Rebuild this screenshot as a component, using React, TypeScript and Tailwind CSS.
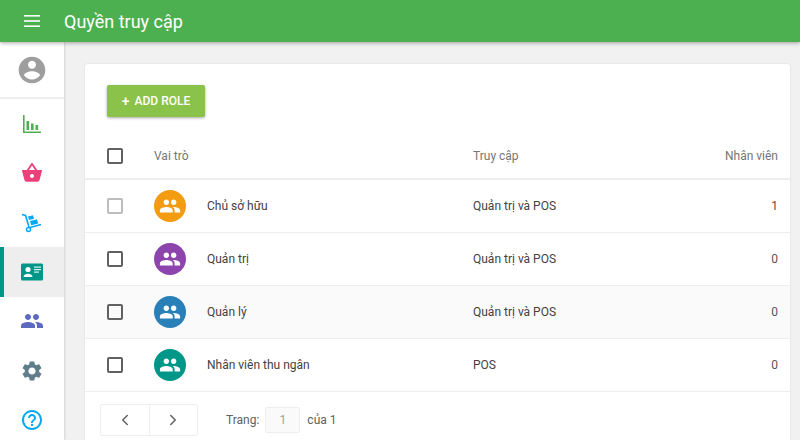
import React from "react";
import { ChevronLeft, ChevronRight } from "lucide-react";

const P = ({ d, c, s = 24 }: { d: string; c: string; s?: number }) => (
  <svg width={s} height={s} viewBox="0 0 24 24" fill={c}><path d={d} /></svg>
);

const people = "M16 11c1.66 0 2.99-1.34 2.99-3S17.66 5 16 5s-3 1.34-3 3 1.34 3 3 3zm-8 0c1.66 0 2.99-1.34 2.99-3S9.66 5 8 5 5 6.34 5 8s1.34 3 3 3zm0 2c-2.33 0-7 1.17-7 3.5V19h14v-2.5c0-2.33-4.67-3.5-7-3.5zm8 0c-.29 0-.62.02-.97.05 1.16.84 1.97 1.97 1.97 3.45V19h6v-2.5c0-2.33-4.67-3.5-7-3.5z";

const navIcons = [
  { c: "#4caf50", el: (
    <svg width="20" height="20" viewBox="0 0 20 20" fill="#4caf50"><path d="M1 1h1.6v16.4H19V19H1z" /><rect x="4.5" y="7" width="2.6" height="9" /><rect x="9" y="9.5" width="2.6" height="6.5" /><rect x="13.3" y="4" width="0" height="0" /><rect x="13.5" y="11" width="2.6" height="5" /></svg>
  ) },
  { c: "#ec407a", el: <P s={24} c="#ec407a" d="M17.21 9l-4.38-6.56c-.19-.28-.51-.42-.83-.42-.32 0-.64.14-.83.43L6.79 9H2v1l2.53 9.27c.23.84 1 1.46 1.92 1.46h11.1c.92 0 1.69-.62 1.93-1.46L22 10V9h-4.79zM9 9l3-4.4L15 9H9zm3 8c-1.1 0-2-.9-2-2s.9-2 2-2 2 .9 2 2-.9 2-2 2z" /> },
  { c: "#03a9f4", el: (
    <svg width="24" height="24" viewBox="0 0 24 24" fill="none"><path d="M2 4.5l3.5 1L9 17" stroke="#03a9f4" strokeWidth="1.6" /><path d="M10 17.5l11-3" stroke="#03a9f4" strokeWidth="1.6" /><circle cx="8.5" cy="19.5" r="2" stroke="#03a9f4" strokeWidth="1.5" /><path d="M8 6.5l5-1.3 1 3.6-5 1.3zM10 11l7-1.8 1.2 4.2-7 1.8z" fill="#03a9f4" /></svg>
  ) },
  { c: "#009688", el: (
    <svg width="22" height="18" viewBox="0 0 22 18"><rect width="22" height="17" y="0.5" rx="1.5" fill="#009688" /><circle cx="7" cy="6.5" r="2.6" fill="#fff" /><path d="M2.5 14c0-2.2 2.6-3.3 4.5-3.3s4.5 1.1 4.5 3.3z" fill="#fff" /><path d="M13 3.5h7v1.3h-7zM13 6h7v1.3h-7zM13 8.5h5v1.3h-5z" fill="#d5eeeb" /></svg>
  ), active: true },
  { c: "#5c6bc0", el: <P c="#5c6bc0" d={people} /> },
  { c: "#607d8b", el: <P c="#607d8b" d="M19.14 12.94c.04-.3.06-.61.06-.94 0-.32-.02-.64-.07-.94l2.03-1.58c.18-.14.23-.41.12-.61l-1.92-3.32c-.12-.22-.37-.29-.59-.22l-2.39.96c-.5-.38-1.03-.7-1.62-.94l-.36-2.54c-.04-.24-.24-.41-.48-.41h-3.84c-.24 0-.43.17-.47.41l-.36 2.54c-.59.24-1.13.57-1.62.94l-2.39-.96c-.22-.08-.47 0-.59.22L2.74 8.87c-.12.21-.08.47.12.61l2.03 1.58c-.05.3-.09.63-.09.94s.02.64.07.94l-2.03 1.58c-.18.14-.23.41-.12.61l1.92 3.32c.12.22.37.29.59.22l2.39-.96c.5.38 1.03.7 1.62.94l.36 2.54c.05.24.24.41.48.41h3.84c.24 0 .44-.17.47-.41l.36-2.54c.59-.24 1.13-.56 1.62-.94l2.39.96c.22.08.47 0 .59-.22l1.92-3.32c.12-.22.07-.47-.12-.61l-2.01-1.58zM12 15.6c-1.98 0-3.6-1.62-3.6-3.6s1.62-3.6 3.6-3.6 3.6 1.62 3.6 3.6-1.62 3.6-3.6 3.6z" /> },
  { c: "#03a9f4", el: <P c="#03a9f4" d="M11 18h2v-2h-2v2zm1-16C6.48 2 2 6.48 2 12s4.48 10 10 10 10-4.48 10-10S17.52 2 12 2zm0 18c-4.41 0-8-3.59-8-8s3.59-8 8-8 8 3.59 8 8-3.59 8-8 8zm0-14c-2.21 0-4 1.79-4 4h2c0-1.1.9-2 2-2s2 .9 2 2c0 2-3 1.75-3 5h2c0-2.25 3-2.5 3-5 0-2.21-1.79-4-4-4z" /> },
];

const rows = [
  { name: "Chủ sở hữu", access: "Quản trị và POS", n: "1", color: "#f39c12", box: "border-[#bdbdbd]", numC: "text-[#8c3a3a]" },
  { name: "Quản trị", access: "Quản trị và POS", n: "0", color: "#8e44ad", box: "border-[#616161]", numC: "text-[#555]" },
  { name: "Quản lý", access: "Quản trị và POS", n: "0", color: "#2980b9", box: "border-[#616161]", numC: "text-[#555]", hover: true },
  { name: "Nhân viên thu ngân", access: "POS", n: "0", color: "#009688", box: "border-[#616161]", numC: "text-[#555]" },
];

export default function App() {
  return (
    <div className="w-[800px] h-[440px] overflow-hidden flex flex-col bg-[#f1f1f1] font-['Roboto',sans-serif]">
      <header className="relative z-20 h-[42px] shrink-0 bg-[#4caf50] flex items-center shadow-[0_1px_4px_rgba(0,0,0,0.35)]">
        <div className="w-[64px] flex justify-center">
          <svg width="16" height="12" viewBox="0 0 16 12" fill="#fff" className="mr-[0px]"><rect width="16" height="1.6" y="0" /><rect width="16" height="1.6" y="5.2" /><rect width="16" height="1.6" y="10.4" /></svg>
        </div>
        <h1 className="text-[18px] font-normal text-white">Quyền truy cập</h1>
      </header>
      <div className="flex flex-1 min-h-0">
        <aside className="relative z-10 w-[64px] shrink-0 bg-white flex flex-col shadow-[1px_0_2px_rgba(0,0,0,0.12)]">
          <div className="h-[57px] shrink-0 flex items-center justify-center border-b-2 border-[#eeeeee]">
            <P s={32} c="#9e9e9e" d="M12 2C6.48 2 2 6.48 2 12s4.48 10 10 10 10-4.48 10-10S17.52 2 12 2zm0 3c1.66 0 3 1.34 3 3s-1.34 3-3 3-3-1.34-3-3 1.34-3 3-3zm0 14.2c-2.5 0-4.71-1.28-6-3.22.03-1.99 4-3.08 6-3.08 1.99 0 5.97 1.09 6 3.08-1.29 1.94-3.5 3.22-6 3.22z" />
          </div>
          {navIcons.map((it, i) => (
            <div key={i} className={`h-[49.4px] shrink-0 flex items-center justify-center ${it.active ? "bg-[#eeeeee] border-l-[4px] border-[#009688]" : ""}`}>
              <span className={`flex ${it.active ? "mr-[4px]" : ""}`}>{it.el}</span>
            </div>
          ))}
        </aside>
        <main className="flex-1 min-w-0 pt-[22px] pl-[21px] pr-[10px]">
          <div className="bg-white rounded-[3px] h-[400px] shadow-[0_0_2px_rgba(0,0,0,0.12)]">
            <div className="pt-[21px] pl-[22px] h-[70px]">
              <button className="h-[32px] w-[98px] bg-[#8bc34a] rounded-[2px] text-white text-[12px] font-medium flex items-center justify-center gap-[5px] shadow-[0_1px_3px_rgba(0,0,0,0.35)]">
                <span className="text-[14px] leading-none">+</span>ADD ROLE
              </button>
            </div>
            <div className="h-[46px] flex items-center pl-[22px] pr-[12px] border-b-2 border-[#eeeeee] text-[12px] text-[#757575]">
              <span className="w-[16px] h-[16px] border-2 border-[#616161] rounded-[2px] box-border" />
              <span className="ml-[31px] w-[319px]">Vai trò</span>
              <span className="flex-1">Truy cập</span>
              <span>Nhân viên</span>
            </div>
            {rows.map((r) => (
              <div key={r.name} className={`h-[53px] flex items-center pl-[22px] pr-[12px] border-b border-[#eeeeee] text-[12px] text-[#424242] ${r.hover ? "bg-[#fafafa]" : ""}`}>
                <span className={`w-[16px] h-[16px] border-2 ${r.box} rounded-[2px] box-border`} />
                <span className="ml-[31px] w-[32px] h-[32px] rounded-full flex items-center justify-center" style={{ backgroundColor: r.color }}>
                  <P s={22} c="#fff" d={people} />
                </span>
                <span className="ml-[21px] w-[266px]">{r.name}</span>
                <span className="flex-1">{r.access}</span>
                <span className={r.numC}>{r.n}</span>
              </div>
            ))}
            <div className="flex items-center pl-[15px] pt-[12px] text-[12px] text-[#616161]">
              <div className="flex h-[32px] w-[98px] border border-[#eeeeee] rounded-[2px]">
                <span className="flex-1 flex items-center justify-center border-r border-[#eeeeee]"><ChevronLeft size={18} color="#616161" /></span>
                <span className="flex-1 flex items-center justify-center"><ChevronRight size={18} color="#616161" /></span>
              </div>
              <span className="ml-[28px]">Trang:</span>
              <span className="ml-[6px] w-[35px] h-[26px] flex items-center justify-center bg-[#fafafa] border border-[#eeeeee] rounded-[2px] text-[#9e9e9e]">1</span>
              <span className="ml-[7px]">của 1</span>
            </div>
          </div>
        </main>
      </div>
    </div>
  );
}
